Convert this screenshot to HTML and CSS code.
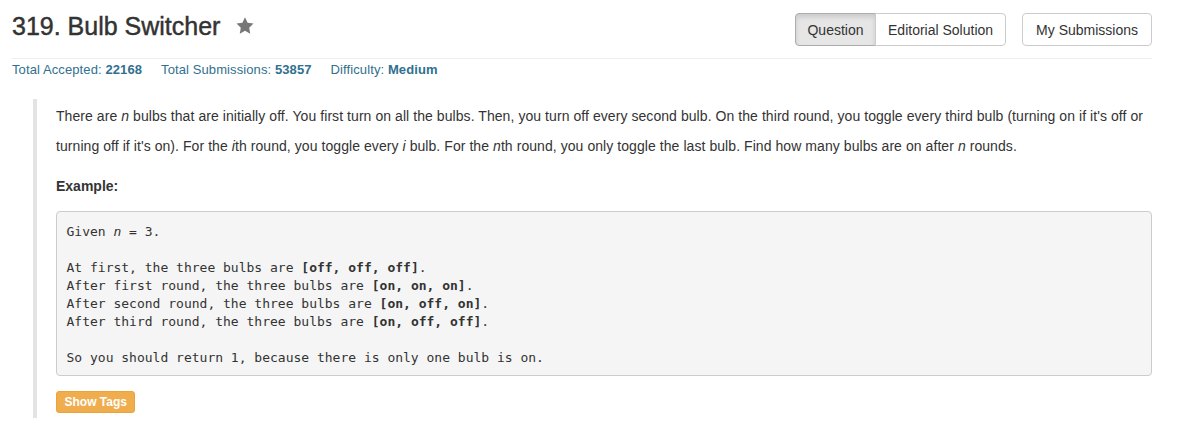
FILE: index.html
```html
<!DOCTYPE html>
<html lang="en">
<head>
<meta charset="utf-8">
<title>319. Bulb Switcher</title>
<link rel="stylesheet" href="styles.css">
</head>
<body>
<div class="page">
  <div class="header">
    <h3 class="title">319. Bulb Switcher
      <svg class="star" width="18" height="17" viewBox="0 0 24 23" aria-hidden="true"><path d="M12 0.5l3.5 7.3 8 1.1-5.8 5.6 1.4 8-7.1-3.8-7.1 3.8 1.4-8L0.5 8.9l8-1.1z" fill="#777"/></svg>
    </h3>
    <div class="actions">
      <div class="btn-group">
        <a class="btn active">Question</a>
        <a class="btn">Editorial Solution</a>
      </div>
      <a class="btn single">My Submissions</a>
    </div>
  </div>
  <div class="stats">
    <span class="stat">Total Accepted: <b>22168</b></span>
    <span class="stat">Total Submissions: <b>53857</b></span>
    <span class="stat">Difficulty: <b>Medium</b></span>
  </div>
  <div class="question">
    <p class="desc">There are <i>n</i> bulbs that are initially off. You first turn on all the bulbs. Then, you turn off every second bulb. On the third round, you toggle every third bulb (turning on if it's off or turning off if it's on). For the <i>i</i>th round, you toggle every <i>i</i> bulb. For the <i>n</i>th round, you only toggle the last bulb. Find how many bulbs are on after <i>n</i> rounds.</p>
    <p class="example"><b>Example:</b></p>
<pre class="code">Given <i>n</i> = 3.

At first, the three bulbs are <b>[off, off, off]</b>.
After first round, the three bulbs are <b>[on, on, on]</b>.
After second round, the three bulbs are <b>[on, off, on]</b>.
After third round, the three bulbs are <b>[on, off, off]</b>.

So you should return 1, because there is only one bulb is on.</pre>
    <a class="tags-btn">Show Tags</a>
  </div>
</div>
</body>
</html>
```

FILE: styles.css
```css
html, body {
  margin: 0;
  padding: 0;
  background: #fff;
}
body {
  font-family: "Liberation Sans", Arial, Helvetica, sans-serif;
  color: #333;
  font-size: 14px;
}
.page {
  width: 1140px;
  margin-left: 12px;
}
.header {
  display: flex;
  justify-content: space-between;
  align-items: flex-start;
  padding-top: 13px;
  height: 45px;
  border-bottom: 1px solid #eee;
}
.title {
  margin: 0;
  font-size: 25px;
  line-height: 26px;
  font-weight: normal;
  -webkit-text-stroke: 0.45px #333;
  color: #333;
  display: flex;
  align-items: center;
}
.star {
  margin-left: 16px;
  margin-top: -1px;
}
.actions {
  display: flex;
  gap: 16px;
}
.btn-group {
  display: flex;
}
.btn {
  display: block;
  box-sizing: border-box;
  height: 33px;
  line-height: 32px;
  padding: 0 12px;
  border: 1px solid #ccc;
  background: #fff;
  color: #333;
  font-size: 14px;
  border-radius: 4px;
  white-space: nowrap;
}
.btn-group .btn:first-child {
  border-top-right-radius: 0;
  border-bottom-right-radius: 0;
  padding: 0 11.5px;
}
.btn-group .btn:last-child {
  border-top-left-radius: 0;
  border-bottom-left-radius: 0;
  margin-left: -1px;
}
.btn.active {
  background: #e6e6e6;
  border-color: #adadad;
  box-shadow: inset 0 3px 5px rgba(0, 0, 0, 0.125);
}
.btn.single {
  padding: 0 13px;
}
.stats {
  margin-top: 2px;
  display: flex;
  gap: 19px;
  font-size: 13px;
  line-height: 17px;
  letter-spacing: 0.1px;
  color: #31708f;
}
.stats b {
  font-weight: bold;
}
.question {
  margin: 21px 0 0 21px;
  border-left: 4px solid #e3e3e3;
  padding: 2px 0 5px 19px;
}
.desc {
  margin: 0;
  line-height: 30px;
  letter-spacing: 0.065px;
}
.example {
  margin: 10px 0 0;
  line-height: 30px;
}
.code {
  margin: 10px 0 0;
  padding: 11px 9.5px 8px;
  background: #f5f5f5;
  border: 1px solid #ccc;
  border-radius: 4px;
  color: #333;
  font-family: "DejaVu Sans Mono", Menlo, monospace;
  font-size: 13px;
  line-height: 18px;
  white-space: pre;
}
.code b {
  font-weight: bold;
}
.tags-btn {
  display: inline-block;
  margin-top: 15px;
  box-sizing: border-box;
  height: 22px;
  line-height: 20px;
  padding: 0 7.5px;
  background: #f0ad4e;
  border: 1px solid #eea236;
  border-radius: 3px;
  color: #fff;
  font-size: 12px;
  font-weight: bold;
}
```
